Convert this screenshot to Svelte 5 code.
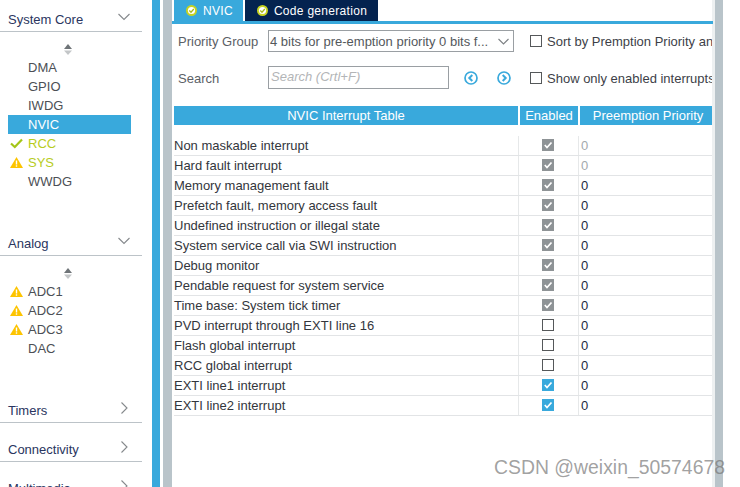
<script>
  const core = [
    { name: 'DMA' },
    { name: 'GPIO' },
    { name: 'IWDG' },
    { name: 'NVIC', active: true },
    { name: 'RCC', status: 'ok', lit: true },
    { name: 'SYS', status: 'warn', lit: true },
    { name: 'WWDG' }
  ];
  const analog = [
    { name: 'ADC1', status: 'warn' },
    { name: 'ADC2', status: 'warn' },
    { name: 'ADC3', status: 'warn' },
    { name: 'DAC' }
  ];
  // state: locked = grey tick, on = blue tick, off = empty
  const rows = [
    { name: 'Non maskable interrupt', state: 'locked', dim: true },
    { name: 'Hard fault interrupt', state: 'locked', dim: true },
    { name: 'Memory management fault', state: 'locked' },
    { name: 'Prefetch fault, memory access fault', state: 'locked' },
    { name: 'Undefined instruction or illegal state', state: 'locked' },
    { name: 'System service call via SWI instruction', state: 'locked' },
    { name: 'Debug monitor', state: 'locked' },
    { name: 'Pendable request for system service', state: 'locked' },
    { name: 'Time base: System tick timer', state: 'locked' },
    { name: 'PVD interrupt through EXTI line 16', state: 'off' },
    { name: 'Flash global interrupt', state: 'off' },
    { name: 'RCC global interrupt', state: 'off' },
    { name: 'EXTI line1 interrupt', state: 'on' },
    { name: 'EXTI line2 interrupt', state: 'on' }
  ];
</script>

{#snippet chevron(open)}
  <svg class="chev" width="14" height="14" viewBox="0 0 14 14">
    {#if open}
      <path d="M1.500 4 L7 9.500 L12.500 4" />
    {:else}
      <path d="M4.500 1.500 L10 7 L4.500 12.500" />
    {/if}
  </svg>
{/snippet}

{#snippet updown()}
  <svg class="updown" width="8" height="11" viewBox="0 0 8 11">
    <path d="M4 0 L8 5 H0 Z" fill="#6f7478" />
    <path d="M0 6.500 H8 L4 11 Z" fill="#c3c6c8" />
  </svg>
{/snippet}

{#snippet items(list)}
  <ul>
    {#each list as it}
      <li class:active={it.active}>
        <span class="ico">
          {#if it.status === 'ok'}
            <svg width="13" height="11" viewBox="0 0 13 11"><path d="M1 5.500 L4.800 9 L12 1.500" fill="none" stroke="#a4c618" stroke-width="2.200" /></svg>
          {:else if it.status === 'warn'}
            <svg width="13" height="11" viewBox="0 0 13 11">
              <path d="M6.500 0 L13 11 H0 Z" fill="#fdc400" />
              <rect x="5.800" y="3.500" width="1.400" height="4" fill="#fff" />
              <rect x="5.800" y="8.300" width="1.400" height="1.400" fill="#fff" />
            </svg>
          {/if}
        </span>
        <span class:lit={it.lit}>{it.name}</span>
      </li>
    {/each}
  </ul>
{/snippet}

{#snippet tick(color)}
  <svg class="tick" width="12" height="12" viewBox="0 0 12 12"><rect width="12" height="12" fill={color} /><path d="M2.800 6 L5 8.500 L9.500 3.500" fill="none" stroke="#fff" stroke-width="1.700" /></svg>
{/snippet}

{#snippet tabdot()}
  <svg class="dot" width="11" height="11" viewBox="0 0 11 11">
    <circle cx="5.500" cy="5.500" r="5.500" fill="#c6d31f" />
    <circle cx="5.500" cy="5.500" r="3.600" fill="#fff" />
    <path d="M3.300 5.500 L5 7.200 L7.800 4" fill="none" stroke="#a9b81a" stroke-width="1.300" />
  </svg>
{/snippet}

<div class="page">
  <aside class="side">
    <div class="head first"><span>System Core</span>{@render chevron(true)}</div>
    <div class="arrows">{@render updown()}</div>
    {@render items(core)}
    <div class="head spaced"><span>Analog</span>{@render chevron(true)}</div>
    <div class="arrows">{@render updown()}</div>
    {@render items(analog)}
    <div class="head spaced"><span>Timers</span>{@render chevron(false)}</div>
    <div class="head conn"><span>Connectivity</span>{@render chevron(false)}</div>
    <div class="head conn"><span>Multimedia</span>{@render chevron(false)}</div>
  </aside>

  <div class="blue-strip"></div>
  <div class="grey-strip"></div>

  <main class="panel">
    <nav class="tabs">
      <div class="tab on">{@render tabdot()}NVIC</div>
      <div class="tab">{@render tabdot()}Code generation</div>
    </nav>

    <div class="form">
      <div class="form-row one">
        <span class="flabel">Priority Group</span>
        <div class="select">
          <span>4 bits for pre-emption priority 0 bits f...</span>
          <svg class="sel-chev" width="11" height="7" viewBox="0 0 11 7"><path d="M0.500 1 L5.500 6 L10.500 1" /></svg>
        </div>
        <label class="check"><span class="box"></span>Sort by Premption Priority and Sub Priority</label>
      </div>
      <div class="form-row two">
        <span class="flabel">Search</span>
        <div class="search">Search (Crtl+F)</div>
        <div class="navs">
          <svg width="14" height="14" viewBox="0 0 14 14"><circle cx="7" cy="7" r="6" /><path class="arrow" d="M8.300 4 L5.300 7 L8.300 10" /></svg>
          <svg width="14" height="14" viewBox="0 0 14 14"><circle cx="7" cy="7" r="6" /><path class="arrow" d="M5.700 4 L8.700 7 L5.700 10" /></svg>
        </div>
        <label class="check"><span class="box"></span>Show only enabled interrupts</label>
      </div>
    </div>

    <div class="thead">
      <div class="th name">NVIC Interrupt Table</div>
      <div class="th en">Enabled</div>
      <div class="th pr">Preemption Priority</div>
    </div>

    <div class="tbody">
      {#each rows as r}
        <div class="tr">
          <div class="td name">{r.name}</div>
          <div class="td en">
            {#if r.state === 'locked'}
              {@render tick('#8e9396')}
            {:else if r.state === 'on'}
              {@render tick('#39a9dc')}
            {:else}
              <span class="box"></span>
            {/if}
          </div>
          <div class="td pr" class:dim={r.dim}>0</div>
        </div>
      {/each}
    </div>
  </main>

  <div class="grey-strip right"></div>

  <div class="mark">CSDN @weixin_50574678</div>
</div>

<style>
  :global(body) { margin: 0; background: #fff; }
  .page {
    display: flex;
    position: relative;
    width: 740px;
    height: 487px;
    overflow: hidden;
    background: #fff;
    font-family: "Liberation Sans", Arial, sans-serif;
    font-size: 12px;
    color: #39393f;
  }

  .side { width: 142px; flex: none; margin-right: 10px; }
  .head {
    display: flex;
    justify-content: space-between;
    align-items: center;
    height: 22px;
    padding: 0 11px 0 8px;
    border-bottom: 1px solid #bcc3c8;
    color: #2a3560;
    font-size: 13px;
  }
  .head.first { margin-top: 9px; }
  .head.spaced { margin-top: 42px; }
  .head.conn { margin-top: 16px; }
  .head span { padding-bottom: 2px; }
  .chev { margin-top: -6px; }
  .chev path { fill: none; stroke: #85898c; stroke-width: 1.100; }
  .arrows { display: flex; justify-content: center; align-items: flex-end; height: 23px; margin-left: -6px; }
  .updown { display: block; }

  ul { list-style: none; margin: 3px 0 0; padding: 0 11px 0 8px; }
  li { display: flex; align-items: center; height: 19px; font-size: 13px; color: #4c4f55; }
  .ico { width: 20px; flex: none; display: flex; align-items: center; justify-content: center; margin-left: -2px; margin-right: 2px; }
  .active { background: #39a9dc; color: #fff; }
  .lit { color: #b7cc1e; }

  .blue-strip { width: 8px; flex: none; background: #39a9dc; }
  .grey-strip { width: 9px; flex: none; background: #b9c4ca; margin-left: 3px; }
  .grey-strip.right { width: 8px; margin-left: 0; }

  .panel { width: 543px; flex: none; box-sizing: border-box; padding-right: 3px; background: #fff; box-shadow: inset -3px 0 0 #edf0f1; }

  .tabs {
    display: flex;
    gap: 2px;
    height: 21px;
    padding-left: 2px;
    border-bottom: 3px solid #39a9dc;
    margin-right: -1px;
  }
  .tab {
    display: flex;
    align-items: center;
    padding: 0 11px 0 12px;
    background: #04234f;
    color: #fff;
    font-size: 12px;
    letter-spacing: 0.3px;
  }
  .tab.on { background: #39a9dc; padding-right: 10px; }
  .dot { margin-right: 6px; flex: none; }

  .form { padding-top: 6px; overflow: hidden; }
  .form-row { display: flex; align-items: center; white-space: nowrap; }
  .form-row.one { height: 22px; }
  .form-row.two { height: 23px; margin-top: 14px; }
  .two .flabel, .two .check { padding-top: 1px; }
  .flabel { width: 90px; margin-left: 6px; flex: none; font-size: 13px; color: #5b6066; }
  .select, .search { box-sizing: border-box; border: 1px solid #9a9fa3; flex: none; }
  .select {
    width: 246px;
    height: 22px;
    display: flex;
    align-items: center;
    justify-content: space-between;
    padding: 0 4px 0 1px;
    font-size: 13px;
    color: #54585c;
  }
  .sel-chev path { fill: none; stroke: #7d8184; stroke-width: 1.100; }
  .search {
    width: 181px;
    height: 23px;
    line-height: 20px;
    padding-left: 2px;
    font-size: 13px;
    font-style: italic;
    color: #b3b5b7;
  }
  .navs { width: 65px; flex: none; display: flex; gap: 19px; padding-left: 15px; box-sizing: border-box; }
  .navs svg { fill: none; stroke: #39a9dc; stroke-width: 1.700; }
  .navs .arrow { stroke-width: 2; }
  .check { display: flex; align-items: center; margin-left: 16px; font-size: 13px; color: #3d3f48; }
  .box { display: block; width: 10px; height: 10px; border: 1px solid #55585a; flex: none; }
  .check .box { margin-right: 5px; }

  .thead { display: flex; gap: 2px; height: 19px; margin: 17px 0 0 2px; width: 538px; }
  .th {
    background: #39a9dc;
    color: #fff;
    font-size: 13px;
    line-height: 19px;
    text-align: center;
  }
  .th.name { width: 344px; }
  .th.en { width: 58px; }
  .th.pr { width: 128px; padding-left: 4px; }

  .tbody { margin: 11px 0 0 2px; width: 538px; }
  .tr { display: flex; height: 19px; border-bottom: 1px solid #e2e4e6; }
  .td { display: flex; align-items: center; font-size: 13px; color: #33363c; }
  .td.name { width: 344px; border-right: 1px solid #e6e8e9; }
  .td.en { width: 58px; padding: 0 1px 1px 0; justify-content: center; border-right: 1px solid #e6e8e9; box-sizing: content-box; height: 18px; }
  .td.pr { padding-left: 2px; color: #1c2a40; }
  .td.dim { color: #a3a9ad; }
  .tick { display: block; }

  .mark {
    position: absolute;
    right: 15px;
    bottom: 8px;
    font-size: 19.400px;
    color: rgba(120, 120, 120, 0.7);
  }
</style>
